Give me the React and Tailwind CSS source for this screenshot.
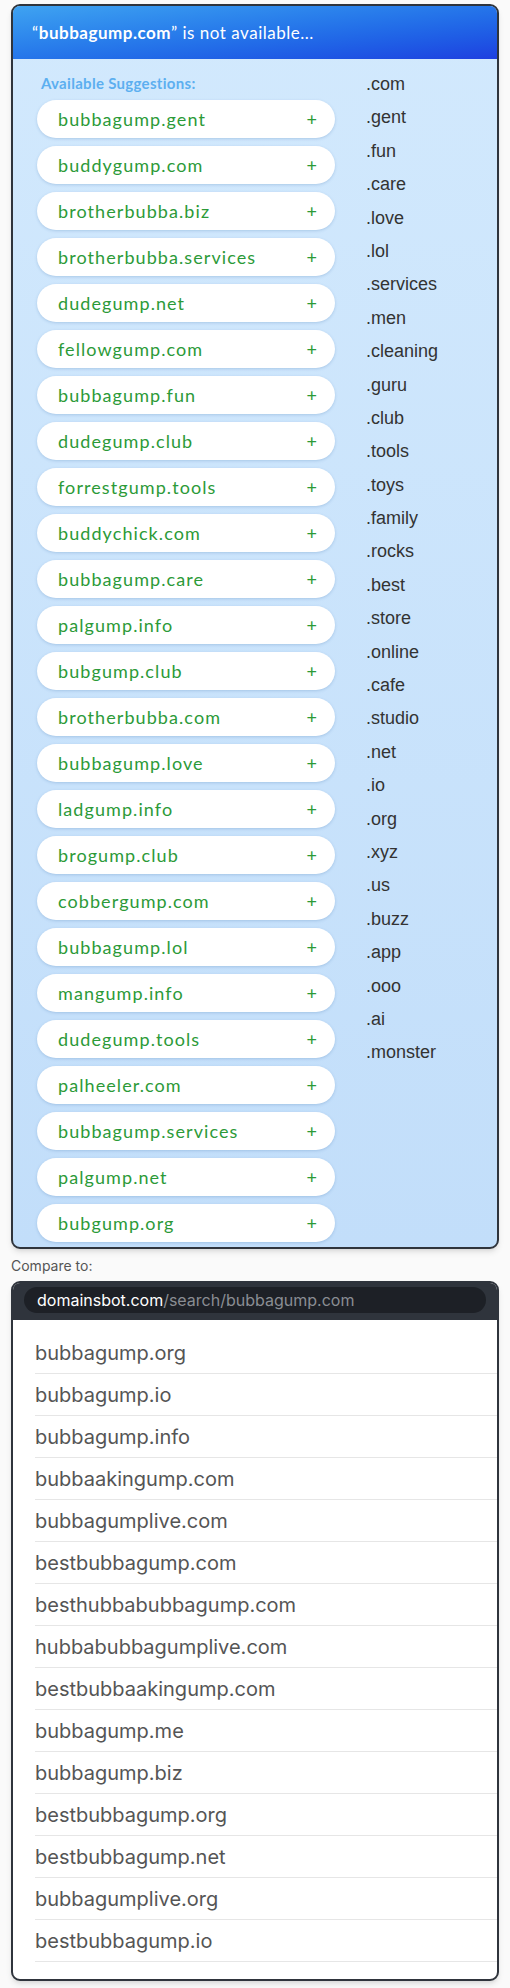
const suggestions = [
  "bubbagump.gent",
  "buddygump.com",
  "brotherbubba.biz",
  "brotherbubba.services",
  "dudegump.net",
  "fellowgump.com",
  "bubbagump.fun",
  "dudegump.club",
  "forrestgump.tools",
  "buddychick.com",
  "bubbagump.care",
  "palgump.info",
  "bubgump.club",
  "brotherbubba.com",
  "bubbagump.love",
  "ladgump.info",
  "brogump.club",
  "cobbergump.com",
  "bubbagump.lol",
  "mangump.info",
  "dudegump.tools",
  "palheeler.com",
  "bubbagump.services",
  "palgump.net",
  "bubgump.org",
];

const tlds = [
  ".com", ".gent", ".fun", ".care", ".love", ".lol", ".services", ".men",
  ".cleaning", ".guru", ".club", ".tools", ".toys", ".family", ".rocks",
  ".best", ".store", ".online", ".cafe", ".studio", ".net", ".io", ".org",
  ".xyz", ".us", ".buzz", ".app", ".ooo", ".ai", ".monster",
];

const compare = [
  "bubbagump.org",
  "bubbagump.io",
  "bubbagump.info",
  "bubbaakingump.com",
  "bubbagumplive.com",
  "bestbubbagump.com",
  "besthubbabubbagump.com",
  "hubbabubbagumplive.com",
  "bestbubbaakingump.com",
  "bubbagump.me",
  "bubbagump.biz",
  "bestbubbagump.org",
  "bestbubbagump.net",
  "bubbagumplive.org",
  "bestbubbagump.io",
];

export default function App() {
  return (
    <div className="min-h-screen bg-[#fafafa] px-[11px] pt-[4px] pb-[6px]" style={{ fontFamily: "Inter, sans-serif" }}>
      {/* Suggestions card */}
      <div className="h-[1245px] overflow-hidden rounded-[9px] border-2 border-[#2f343c] bg-gradient-to-b from-[#d2e9fd] to-[#c2defa] shadow-md">
        <div
          className="flex h-[53px] items-center bg-gradient-to-br from-[#3fa3f1] to-[#1f3fe0] px-[19px] text-[17px] tracking-[0.03em] text-white"
          style={{ fontFamily: "Lato, sans-serif" }}
        >
          <span>
            “<span className="font-bold">bubbagump.com</span>” is not available...
          </span>
        </div>

        <div className="flex">
          <div className="w-[322px] shrink-0 pl-[24px] pt-[14px]">
            <div
              className="mb-[7px] pl-[4px] text-[15px] font-bold leading-[20px] tracking-[0.02em] text-[#5caff0]"
              style={{ fontFamily: "Lato, sans-serif" }}
            >
              Available Suggestions:
            </div>
            <div className="flex w-[298px] flex-col gap-[8px]">
              {suggestions.map((s) => (
                <div
                  key={s}
                  className="flex h-[38px] items-center justify-between rounded-full bg-white pl-[21px] pr-[18px] text-[#2c9a38] shadow-[0_1px_3px_rgba(60,110,170,0.25)]"
                  style={{ fontFamily: "Lato, sans-serif" }}
                >
                  <span className="text-[18px] font-normal tracking-[0.06em]">{s}</span>
                  <span className="text-[18px]">+</span>
                </div>
              ))}
            </div>
          </div>
          <div className="flex flex-col pl-[31px] pt-[9px]" style={{ fontFamily: "'Liberation Sans', Arial, sans-serif" }}>
            {tlds.map((t) => (
              <div key={t} className="h-[33.4px] text-[18px] leading-[33.4px] text-[#333]">
                {t}
              </div>
            ))}
          </div>
        </div>
      </div>

      <div className="pt-[7px] pb-[5px] text-[14px] leading-[20px] text-[#555]">Compare to:</div>

      {/* domainsbot card */}
      <div className="overflow-hidden rounded-[9px] border-2 border-[#2f343c] bg-white shadow-md">
        <div className="bg-[#2f343c] px-[11px] pt-[4px] pb-[7px]">
          <div className="flex h-[26px] items-center rounded-full bg-[#1d2026] px-[13px] text-[16px]">
            <span className="text-white">domainsbot.com</span>
            <span className="text-[#8a8d93]">/search/bubbagump.com</span>
          </div>
        </div>
        <div className="pl-[22px] pt-[12px] pb-[17px]">
          {compare.map((c) => (
            <div key={c} className="flex h-[42px] items-center border-b border-[#e6e6e6] text-[20px] text-[#555]">
              {c}
            </div>
          ))}
        </div>
      </div>
    </div>
  );
}
